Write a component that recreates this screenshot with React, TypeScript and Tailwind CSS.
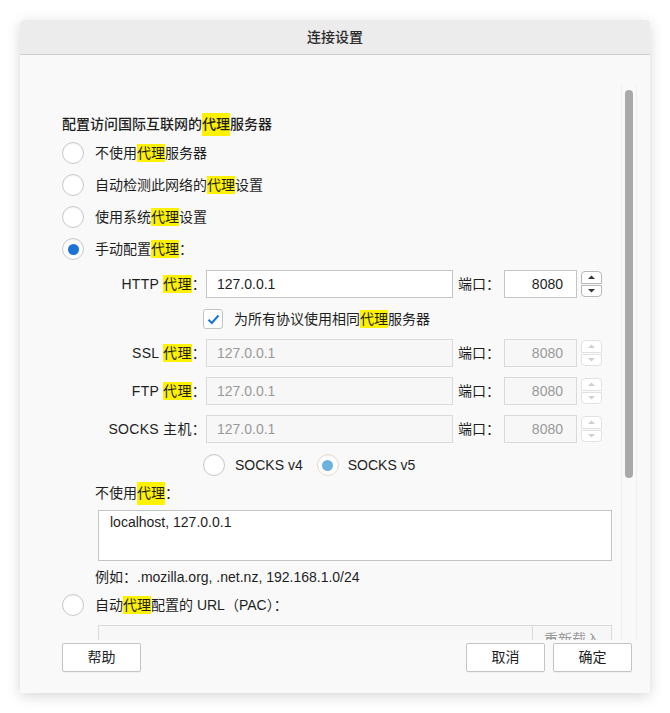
import type { ReactNode } from 'react';

const FONT = 'font-["Liberation_Sans","Noto_Sans_CJK_SC",sans-serif]';

function Hl({ children }: { children: ReactNode }) {
  return <span className="bg-[#fff200] py-[1px]">{children}</span>;
}

function Radio({ checked, disabled }: { checked?: boolean; disabled?: boolean }) {
  return (
    <span
      className={`flex h-[22px] w-[22px] shrink-0 items-center justify-center rounded-full border bg-white shadow-[inset_0_1px_1px_rgba(0,0,0,0.06)] ${
        disabled && checked ? 'border-[#ead9c9]' : 'border-[#c9c9c9]'
      }`}
    >
      {checked && (
        <span
          className={`h-[11px] w-[11px] rounded-full ${disabled ? 'bg-[#6cb2df]' : 'bg-[#1a73d5]'}`}
        />
      )}
    </span>
  );
}

function Field({
  value,
  width,
  disabled,
  right,
}: {
  value: string;
  width: string;
  disabled?: boolean;
  right?: boolean;
}) {
  return (
    <div
      className={`flex h-[28px] shrink-0 items-center border ${width} ${
        right ? 'justify-end pr-[13px]' : 'pl-[10px]'
      } ${disabled ? 'border-[#dadada] bg-[#f7f7f7] text-[#9a9a9a]' : 'border-[#c4c4c4] bg-white text-[#1e1e1e]'}`}
    >
      {value}
    </div>
  );
}

function Spinner({ disabled }: { disabled?: boolean }) {
  const border = disabled ? 'border-[#e2e2e2]' : 'border-[#b8b8b8]';
  const fill = disabled ? '#d0d0d0' : '#333';
  return (
    <div className="ml-[4px] flex h-[26px] w-[21px] flex-col gap-[1px]">
      <div className={`flex flex-1 items-center justify-center rounded-t-[4px] border bg-white ${border}`}>
        <svg width="7" height="4" viewBox="0 0 7 4">
          <path d="M0 4 L3.5 0.5 L7 4 Z" fill={fill} />
        </svg>
      </div>
      <div className={`flex flex-1 items-center justify-center rounded-b-[4px] border bg-white ${border}`}>
        <svg width="7" height="4" viewBox="0 0 7 4">
          <path d="M0 0 L3.5 3.5 L7 0 Z" fill={fill} />
        </svg>
      </div>
    </div>
  );
}

function ProxyRow({
  label,
  disabled,
}: {
  label: ReactNode;
  disabled?: boolean;
}) {
  return (
    <div className="flex h-[28px] items-center">
      <span className="w-[144px] shrink-0 text-right tracking-[0.3px]">{label}</span>
      <Field value="127.0.0.1" width="w-[247px]" disabled={disabled} />
      <span className="ml-[5px] w-[46px] shrink-0">端口：</span>
      <Field value="8080" width="w-[73px]" disabled={disabled} right />
      <Spinner disabled={disabled} />
    </div>
  );
}

function Btn({ children }: { children: ReactNode }) {
  return (
    <button className="h-[29px] w-[79px] rounded-[2px] border border-[#c4c4c4] bg-white text-[14px] text-[#1e1e1e] shadow-[0_1px_0_rgba(0,0,0,0.04)]">
      {children}
    </button>
  );
}

export default function App() {
  return (
    <div className={`h-[713px] w-[670px] bg-white pl-[20px] pt-[20px] ${FONT}`}>
      <div className="flex h-[673px] w-[630px] flex-col overflow-hidden rounded-t-[5px] bg-[#f9f9f9] shadow-[0_3px_14px_rgba(0,0,0,0.16)]">
        <div className="flex h-[35px] shrink-0 items-center justify-center border-b border-[#cfcfcf] bg-[#ececec] text-[14px] font-medium text-[#2a2a2a]">
          连接设置
        </div>

        <div className="relative h-[585px] shrink-0 overflow-hidden pl-[42px] pt-[58px] text-[14px] text-[#1e1e1e]">
          <div className="flex h-[22px] items-center font-medium">
            配置访问国际互联网的<Hl>代理</Hl>服务器
          </div>

          <div className="mt-[7px] flex flex-col gap-[10px]">
            <label className="flex h-[22px] items-center gap-[11px]">
              <Radio />
              <span>
                不使用<Hl>代理</Hl>服务器
              </span>
            </label>
            <label className="flex h-[22px] items-center gap-[11px]">
              <Radio />
              <span>
                自动检测此网络的<Hl>代理</Hl>设置
              </span>
            </label>
            <label className="flex h-[22px] items-center gap-[11px]">
              <Radio />
              <span>
                使用系统<Hl>代理</Hl>设置
              </span>
            </label>
            <label className="flex h-[22px] items-center gap-[11px]">
              <Radio checked />
              <span>
                手动配置<Hl>代理</Hl>：
              </span>
            </label>
          </div>

          <div className="mt-[10px]">
            <ProxyRow
              label={
                <>
                  HTTP <Hl>代理</Hl>：
                </>
              }
            />
          </div>

          <div className="ml-[141px] mt-[11px] flex h-[20px] items-center gap-[11px]">
            <span className="flex h-[20px] w-[20px] items-center justify-center rounded-[3px] border border-[#c4c4c4] bg-white">
              <svg width="13" height="11" viewBox="0 0 13 11">
                <path d="M1.5 5.8 L4.8 9 L11.5 1.5" fill="none" stroke="#1a73d5" strokeWidth="2" />
              </svg>
            </span>
            <span>
              为所有协议使用相同<Hl>代理</Hl>服务器
            </span>
          </div>

          <div className="mt-[10px] flex flex-col gap-[10px]">
            <ProxyRow
              disabled
              label={
                <>
                  SSL <Hl>代理</Hl>：
                </>
              }
            />
            <ProxyRow
              disabled
              label={
                <>
                  FTP <Hl>代理</Hl>：
                </>
              }
            />
            <ProxyRow disabled label="SOCKS 主机：" />
          </div>

          <div className="ml-[141px] mt-[11px] flex h-[22px] items-center">
            <Radio disabled />
            <span className="ml-[10px]">SOCKS v4</span>
            <span className="ml-[14px]">
              <Radio checked disabled />
            </span>
            <span className="ml-[9px]">SOCKS v5</span>
          </div>

          <div className="ml-[33px] mt-[8px] flex h-[18px] items-center">
            不使用<Hl>代理</Hl>：
          </div>

          <div className="ml-[36px] mt-[8px] h-[51px] w-[514px] border border-[#c4c4c4] bg-white pl-[11px] pt-[1px] leading-[20px]">
            localhost, 127.0.0.1
          </div>

          <div className="ml-[33px] mt-[7px] flex h-[18px] items-center">
            例如：.mozilla.org, .net.nz, 192.168.1.0/24
          </div>

          <label className="mt-[8px] flex h-[22px] items-center gap-[11px]">
            <Radio />
            <span>
              自动<Hl>代理</Hl>配置的 URL（PAC）：
            </span>
          </label>

          <div className="ml-[36px] mt-[9px] flex h-[28px] w-[514px]">
            <div className="h-full flex-1 border border-[#dadada] bg-[#f7f7f7]" />
            <div className="flex h-full w-[79px] items-start justify-center border border-l-0 border-[#dadada] bg-[#f7f7f7] pt-[3px] text-[#9a9a9a]">
              重新载入
            </div>
          </div>

          <div className="absolute left-[601px] top-[30px] h-[560px] w-[16px] border-x border-[#efefef]" />
          <div className="absolute left-[605px] top-[35px] h-[388px] w-[8px] rounded-full bg-[#a9a9a9]" />
        </div>

        <div className="flex flex-1 items-start pl-[42px] pr-[18px] pt-[3px]">
          <Btn>帮助</Btn>
          <div className="ml-auto flex gap-[8px]">
            <Btn>取消</Btn>
            <Btn>确定</Btn>
          </div>
        </div>
      </div>
    </div>
  );
}
